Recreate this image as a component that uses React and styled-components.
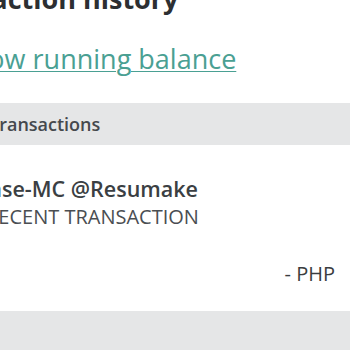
import React from "react";
import styled, { createGlobalStyle } from "styled-components";

const GlobalStyle = createGlobalStyle`
  html, body {
    margin: 0;
    padding: 0;
    background: #ffffff;
  }
  body {
    font-family: "Open Sans", "Liberation Sans", sans-serif;
    overflow: hidden;
  }
`;

const transactions = [
  {
    merchant: "Purchase-MC @Resumake",
    type: "RECENT TRANSACTION",
    currency: "- PHP",
    value: "1,499.00",
  },
];

const App = () => {
  return (
    <>
      <GlobalStyle />
      <Viewport>
        <Page>
          <Title>Transaction history</Title>
          <BalanceLink href="#">Show running balance</BalanceLink>
          <SectionBar $indent={65}>Transactions</SectionBar>
          {transactions.map((tx) => (
            <Row key={tx.merchant}>
              <Details>
                <Merchant>{tx.merchant}</Merchant>
                <Kind>{tx.type}</Kind>
              </Details>
              <Amount>
                {tx.currency}
                <AmountValue>{tx.value}</AmountValue>
              </Amount>
            </Row>
          ))}
          <SectionBar $flush />
        </Page>
      </Viewport>
    </>
  );
};

const Viewport = styled.div`
  width: 350px;
  height: 350px;
  overflow: hidden;
`;

const Page = styled.div`
  width: 504px;
  margin-top: -16px;
  margin-left: -76px;
  display: flex;
  flex-direction: column;
`;

const Title = styled.h1`
  margin: 0 0 0 -8px;
  font-size: 27px;
  line-height: 30px;
  font-weight: 700;
  color: #2c2f32;
  white-space: nowrap;
`;

const BalanceLink = styled.a`
  align-self: flex-start;
  margin: 28px 0 0 33px;
  font-size: 27px;
  line-height: 34px;
  color: #4aa093;
  text-decoration: underline;
  text-decoration-thickness: 1px;
  text-underline-offset: 2px;
  white-space: nowrap;
`;

const SectionBar = styled.div`
  margin-top: ${(p) => (p.$flush ? 0 : 27)}px;
  height: 42px;
  display: flex;
  align-items: center;
  padding-left: ${(p) => p.$indent || 0}px;
  background: #e5e6e7;
  font-size: 18px;
  font-weight: 600;
  color: #45494d;
`;

const Row = styled.div`
  display: flex;
  justify-content: space-between;
  align-items: flex-start;
  padding: 30px 0 24px 62px;
`;

const Details = styled.div`
  display: flex;
  flex-direction: column;
`;

const Merchant = styled.div`
  margin-left: -57px;
  font-size: 21.5px;
  line-height: 28px;
  font-weight: 600;
  color: #3b3f43;
  white-space: nowrap;
`;

const Kind = styled.div`
  font-size: 20px;
  line-height: 28px;
  color: #4a4e52;
  white-space: nowrap;
`;

const Amount = styled.div`
  margin-top: 85px;
  font-size: 20px;
  color: #3a3d40;
  white-space: nowrap;
`;

const AmountValue = styled.span`
  margin-left: 14px;
`;

export default App;
